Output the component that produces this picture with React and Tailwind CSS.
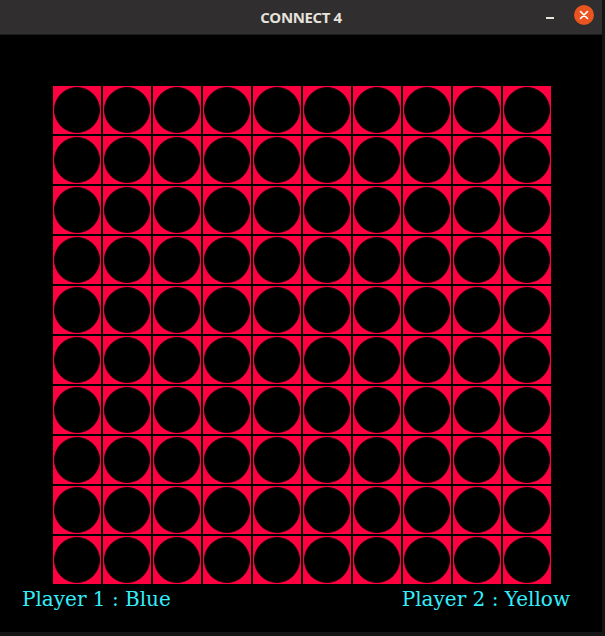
import React from 'react';

const ROWS = 10;
const COLS = 10;

const App = () => {
  const cells = Array.from({ length: ROWS * COLS }, (_, i) => i);

  return (
    <div className="w-[605px] h-[636px] bg-[#141414] flex overflow-hidden">
      <div className="w-[602px] h-[632px] flex flex-col bg-black">
        {/* barra de titulo */}
        <div className="h-[35px] shrink-0 bg-[#302e2e] border-b border-[#1c1c1c] relative flex items-center justify-center">
          <span className="text-[15px] font-bold text-[#e6e2dc] tracking-tight" style={{ fontFamily: '"Open Sans", "Noto Sans", sans-serif' }}>
            CONNECT 4
          </span>
          <div className="absolute left-[546px] top-[17px] w-[8px] h-[2px] bg-[#e6e2dc]" />
          <div className="absolute left-[574px] top-[5px] w-[20px] h-[20px] rounded-full bg-[#e95420] flex items-center justify-center">
            <svg width="10" height="10" viewBox="0 0 10 10">
              <path d="M1.5 1.5 L8.5 8.5 M8.5 1.5 L1.5 8.5" stroke="#fff" strokeWidth="1.6" strokeLinecap="round" />
            </svg>
          </div>
        </div>

        {/* tablero */}
        <div className="pt-[51px] pl-[53px]">
          <div className="grid grid-cols-[repeat(10,48px)] gap-[2px] w-max">
            {cells.map(i => (
              <div key={i} className="w-[48px] h-[48px] bg-[#ff0040] flex items-center justify-center">
                <div className="w-[46px] h-[46px] rounded-full bg-black border border-[#1a0008]" />
              </div>
            ))}
          </div>
        </div>

        {/* jugadores */}
        <div
          className="flex justify-between pl-[22px] pr-[32px] mt-[1px] text-[20px] leading-[28px] text-[#33eefa]"
          style={{ fontFamily: '"DejaVu Serif", serif' }}
        >
          <span>Player 1 : Blue</span>
          <span>Player 2 : Yellow</span>
        </div>
      </div>
    </div>
  );
};

export default App;
